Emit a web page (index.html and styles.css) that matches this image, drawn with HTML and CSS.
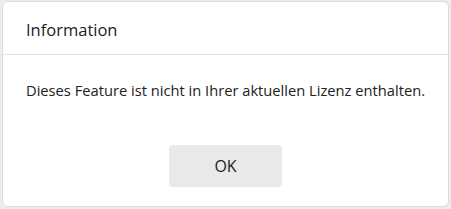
FILE: index.html
```html
<html>
<head>
    <link rel="stylesheet" href="styles.css">
</head>
<body>
<div class="dialog">
    <div class="dialog-header">Information</div>
    <div class="dialog-body">
        <p>Dieses Feature ist nicht in Ihrer aktuellen Lizenz enthalten.</p>
    </div>
    <div class="dialog-footer">
        <button class="btn">OK</button>
    </div>
</div>
</body>
</html>
```

FILE: styles.css
```css
body {
    margin: 0;
    padding: 1px 2px 2px 2px;
    background-color: #ececec;
    font-family: "Open Sans", "Noto Sans", sans-serif;
    color: #222;
}

.dialog {
    background-color: white;
    border: 1px solid #dcdcdc;
    border-radius: 6px;
    height: 206px;
    box-sizing: border-box;
}

.dialog-header {
    height: 53px;
    box-sizing: border-box;
    padding: 16px 0 0 23px;
    font-size: 16.5px;
    border-bottom: 1px solid #e4e4e4;
}

.dialog-body {
    padding: 0 0 0 23px;
    font-size: 14.7px;
    white-space: nowrap;
}

.dialog-body p {
    margin: 25px 0 0 0;
}

.dialog-footer {
    text-align: center;
    margin-top: 45px;
}

.btn {
    width: 113px;
    height: 42px;
    border: none;
    border-radius: 4px;
    background-color: #e9e9e9;
    font-family: "Open Sans", "Noto Sans", sans-serif;
    font-size: 16px;
    color: #222;
}
```
